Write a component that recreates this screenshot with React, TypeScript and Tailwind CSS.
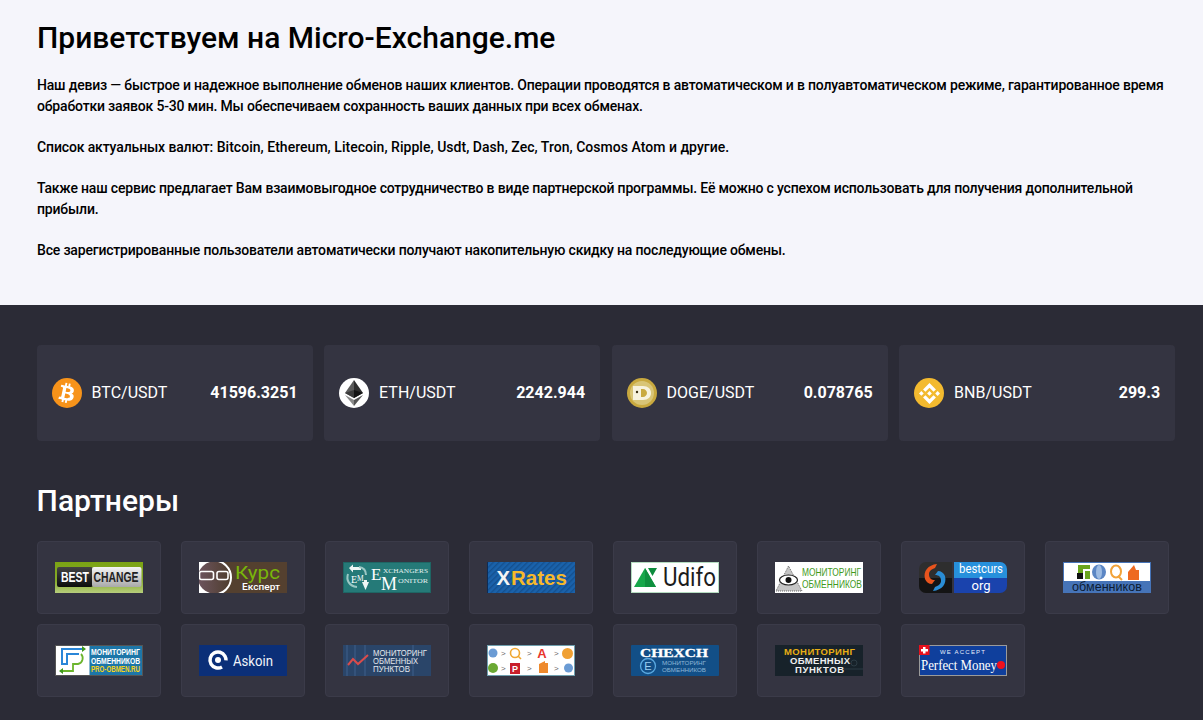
import type { ReactNode } from "react";
import { FaBtc } from "react-icons/fa";
import { SiBinance } from "react-icons/si";

const sans = "'Liberation Sans', Arial, sans-serif";
const serif = "'Liberation Serif', serif";
const roboto = "Roboto, sans-serif";

function Banner({ children }: { children: ReactNode }) {
  return (
    <svg width="88" height="31" viewBox="0 0 88 31" className="block">
      {children}
    </svg>
  );
}

function BestChange() {
  return (
    <Banner>
      <defs>
        <linearGradient id="bcBg" x1="0" y1="0" x2="0" y2="1">
          <stop offset="0" stopColor="#7ba313" />
          <stop offset="0.6" stopColor="#86ab2a" />
          <stop offset="1" stopColor="#b6cd7c" />
        </linearGradient>
        <linearGradient id="bcL" x1="0" y1="0" x2="0" y2="1">
          <stop offset="0" stopColor="#444" />
          <stop offset="1" stopColor="#0c0c0c" />
        </linearGradient>
        <linearGradient id="bcR" x1="0" y1="0" x2="0" y2="1">
          <stop offset="0" stopColor="#f4f4f4" />
          <stop offset="1" stopColor="#a9a9a9" />
        </linearGradient>
      </defs>
      <rect width="88" height="31" fill="url(#bcBg)" />
      <rect x="2" y="5" width="36" height="20" rx="2" fill="url(#bcL)" />
      <rect x="37" y="5" width="49.5" height="20" rx="2" fill="url(#bcR)" />
      <text x="6" y="20" fontFamily={sans} fontWeight="700" fontSize="14" fill="#fff" textLength="28" lengthAdjust="spacingAndGlyphs">
        BEST
      </text>
      <text x="38.5" y="20" fontFamily={sans} fontWeight="700" fontSize="14" fill="#222" textLength="45" lengthAdjust="spacingAndGlyphs">
        CHANGE
      </text>
    </Banner>
  );
}

function KursExpert() {
  return (
    <Banner>
      <defs>
        <linearGradient id="keBg" x1="0" y1="0" x2="1" y2="0">
          <stop offset="0" stopColor="#6e5560" />
          <stop offset="1" stopColor="#4e3d2d" />
        </linearGradient>
      </defs>
      <rect width="88" height="31" fill="#54402f" />
      <rect x="0" y="0" width="15" height="31" fill="#fff" />
      <circle cx="15" cy="15.5" r="17" fill="url(#keBg)" stroke="#fff" strokeWidth="2" />
      <rect x="0.5" y="9.5" width="14" height="8" rx="2" fill="none" stroke="#fff" strokeWidth="1.6" />
      <rect x="18" y="9.5" width="11" height="8" rx="2" fill="none" stroke="#fff" strokeWidth="1.6" />
      <text x="36" y="16.5" fontFamily={roboto} fontSize="19" fill="#79b60a" textLength="45" lengthAdjust="spacingAndGlyphs">
        Курс
      </text>
      <text x="43" y="28" fontFamily={roboto} fontWeight="500" fontSize="9.5" fill="#fff" textLength="38" lengthAdjust="spacingAndGlyphs">
        Експерт
      </text>
    </Banner>
  );
}

function ExchangersMonitor() {
  return (
    <Banner>
      <rect width="88" height="31" fill="#257a78" />
      <rect x="0.5" y="0.5" width="87" height="30" fill="none" stroke="#1e6664" />
      <path d="M6 6l4-3.5V5h8v3h-8v2.5zM26 20l-3.5 8-3.5-8h2v-2h3v2z" fill="#eef7f5" />
      <path d="M5 12c-2 6 1 12 9 13" fill="none" stroke="#9cc8c4" strokeWidth="2" />
      <path d="M16 5c4 .5 7 3 7 8" fill="none" stroke="#9cc8c4" strokeWidth="2" />
      <text x="8" y="20.5" fontFamily={serif} fontSize="10" fill="#fff">
        E
      </text>
      <text x="14" y="18.5" fontFamily={serif} fontSize="7.5" fill="#fff">
        M
      </text>
      <text x="28" y="18" fontFamily={serif} fontSize="17" fill="#fff">
        E
      </text>
      <text x="40" y="11" fontFamily={serif} fontSize="7" fill="#e4f1ef" textLength="45" lengthAdjust="spacingAndGlyphs">
        XCHANGERS
      </text>
      <text x="38" y="28" fontFamily={serif} fontSize="18" fill="#fff">
        M
      </text>
      <text x="55" y="21" fontFamily={serif} fontSize="7" fill="#e4f1ef" textLength="30" lengthAdjust="spacingAndGlyphs">
        ONITOR
      </text>
    </Banner>
  );
}

function XRates() {
  return (
    <Banner>
      <defs>
        <pattern id="xrStripes" width="4" height="4" patternUnits="userSpaceOnUse" patternTransform="rotate(45)">
          <rect width="4" height="4" fill="#1a62ab" />
          <rect width="1.4" height="4" fill="#14508f" />
        </pattern>
      </defs>
      <rect width="88" height="31" fill="url(#xrStripes)" />
      <rect x="0" y="0" width="1" height="31" fill="#0d2c55" />
      <text x="9.5" y="23" fontFamily={sans} fontWeight="700" fontSize="20" fill="#f4f4f4" textLength="13.5" lengthAdjust="spacingAndGlyphs">
        X
      </text>
      <text x="24" y="23" fontFamily={sans} fontWeight="700" fontSize="20" fill="#f6b92b" textLength="56" lengthAdjust="spacingAndGlyphs">
        Rates
      </text>
    </Banner>
  );
}

function Udifo() {
  return (
    <Banner>
      <rect width="88" height="31" fill="#fff" />
      <rect x="0.5" y="0.5" width="87" height="30" fill="none" stroke="#b5dcc0" />
      <path d="M3 25L14 6l11 19z" fill="#17a74a" />
      <path d="M14 6v19h11z" fill="#0f8f3e" />
      <path d="M17 6h9l-4.5 8z" fill="#0d8c3d" />
      <text x="32" y="24" fontFamily={roboto} fontSize="25" fill="#1c1c1c" textLength="53" lengthAdjust="spacingAndGlyphs">
        Udifo
      </text>
    </Banner>
  );
}

function MonitoringEye() {
  return (
    <Banner>
      <rect width="88" height="31" fill="#fff" />
      <path d="M13.5 4L1 29h26z" fill="#c6c6c6" />
      <path d="M13.5 4L1 29h26z" fill="none" stroke="#666" strokeDasharray="1 1" />
      <ellipse cx="13.5" cy="18" rx="9" ry="5" fill="#fff" stroke="#222" strokeWidth="1.2" />
      <circle cx="13.5" cy="18" r="3" fill="#111" />
      <text x="27" y="14" fontFamily={sans} fontSize="11" fill="#3f9a1c" textLength="59" lengthAdjust="spacingAndGlyphs">
        МОНИТОРИНГ
      </text>
      <text x="27" y="25.5" fontFamily={sans} fontSize="11" fill="#3f9a1c" textLength="60" lengthAdjust="spacingAndGlyphs">
        ОБМЕННИКОВ
      </text>
    </Banner>
  );
}

function BestCurs() {
  return (
    <Banner>
      <path d="M7 0h26v31H7a7 7 0 0 1-7-7V7a7 7 0 0 1 7-7z" fill="#2e2e2e" />
      <path d="M0 16h33v15H7a7 7 0 0 1-7-7z" fill="#141414" />
      <path d="M88 16V7a7 7 0 0 0-7-7H35v16z" fill="#2790dc" />
      <path d="M88 16v8a7 7 0 0 1-7 7H35V16z" fill="#1a43ad" />
      <path d="M18 2C9 3 4 9 6 17c1 3 4 5 7 5l3-4c-4 0-6-2-6-6 0-3 3-5 6-6z" fill="#e8541d" />
      <path d="M14 29c9-1 14-7 12-15-1-3-4-5-7-5l-3 4c4 0 6 2 6 6 0 3-3 5-6 6z" fill="#2a8dd4" />
      <text x="40" y="11" fontFamily={roboto} fontSize="13" fill="#fff" textLength="44" lengthAdjust="spacingAndGlyphs">
        bestcurs
      </text>
      <circle cx="62" cy="16" r="1.6" fill="#fff" />
      <text x="62" y="27.5" textAnchor="middle" fontFamily={roboto} fontSize="13" fill="#fff">
        org
      </text>
    </Banner>
  );
}

function Obmennikov() {
  return (
    <Banner>
      <rect width="88" height="31" fill="#4674b8" />
      <rect x="1" y="1" width="86" height="18" fill="#fff" />
      <path d="M15 3h12v4h-7v10h-5z" fill="#6aa51c" />
      <rect x="14" y="11" width="6" height="6" fill="#111" />
      <rect x="22" y="9" width="5" height="8" fill="#6aa51c" />
      <ellipse cx="36" cy="10" rx="7" ry="7.5" fill="#5b86c4" />
      <ellipse cx="36" cy="10" rx="3" ry="7" fill="#9dbbe2" />
      <ellipse cx="53" cy="9.5" rx="5" ry="6" fill="none" stroke="#f2a33a" strokeWidth="2" />
      <path d="M55 14l4 4" stroke="#f2a33a" strokeWidth="2" />
      <path d="M65 10l6-7 2 5h3v10H65z" fill="#ee6a21" />
      <text x="9" y="29" fontFamily={sans} fontSize="12.5" fill="#0d1c33" textLength="70" lengthAdjust="spacingAndGlyphs">
        обменников
      </text>
    </Banner>
  );
}

function ProObmen() {
  return (
    <Banner>
      <rect width="88" height="31" fill="#fff" />
      <rect x="34.5" y="0" width="53.5" height="31" fill="#1d76a8" />
      <rect x="0.5" y="0.5" width="87" height="30" fill="none" stroke="#555" />
      <path d="M28 4H7v15h5V9h12" fill="none" stroke="#2a86d8" strokeWidth="2" />
      <path d="M26 9c3 3 2 9-3 10h-5v7H7" fill="none" stroke="#6cb52d" strokeWidth="1.8" />
      <path d="M27 1l4 3-4 3zM8 23l-4 3 4 3z" fill="#3f9a1c" />
      <text x="36" y="10" fontFamily={sans} fontWeight="700" fontSize="9" fill="#fff" textLength="49" lengthAdjust="spacingAndGlyphs">
        МОНИТОРИНГ
      </text>
      <text x="36" y="18.5" fontFamily={sans} fontWeight="700" fontSize="9" fill="#fff" textLength="49" lengthAdjust="spacingAndGlyphs">
        ОБМЕННИКОВ
      </text>
      <text x="36" y="27" fontFamily={sans} fontWeight="700" fontSize="9.5" fill="#f7d31a" textLength="49" lengthAdjust="spacingAndGlyphs">
        PRO-OBMEN.RU
      </text>
    </Banner>
  );
}

function Askoin() {
  return (
    <Banner>
      <rect width="88" height="31" fill="#0b2f78" />
      <circle cx="19" cy="15" r="8" fill="none" stroke="#fff" strokeWidth="3.5" strokeDasharray="42 8" transform="rotate(60 19 15)" />
      <circle cx="19" cy="15" r="3" fill="#fff" />
      <text x="34" y="21" fontFamily={roboto} fontSize="15" fill="#f2f5fa" textLength="40" lengthAdjust="spacingAndGlyphs">
        Askoin
      </text>
    </Banner>
  );
}

function MonitoringChart() {
  return (
    <Banner>
      <rect width="88" height="31" fill="#2a4569" />
      <path d="M4 0v31M12 0v31M22 0v31M70 0v31" stroke="#34527a" strokeWidth="2" />
      <path d="M5 20l5-6 5 5 10-9" fill="none" stroke="#d94c4c" strokeWidth="2" />
      <text x="30" y="11" fontFamily={sans} fontSize="8.5" fill="#e4e8ee" textLength="54" lengthAdjust="spacingAndGlyphs">
        МОНИТОРИНГ
      </text>
      <text x="30" y="19" fontFamily={sans} fontSize="8.5" fill="#e4e8ee" textLength="45" lengthAdjust="spacingAndGlyphs">
        ОБМЕННЫХ
      </text>
      <text x="30" y="27" fontFamily={sans} fontSize="8.5" fill="#e4e8ee" textLength="37" lengthAdjust="spacingAndGlyphs">
        ПУНКТОВ
      </text>
    </Banner>
  );
}

function Arrows() {
  const gt = [
    [14, 11],
    [40, 11],
    [67, 11],
    [14, 26],
    [40, 26],
    [67, 26],
  ];
  return (
    <Banner>
      <rect width="88" height="31" fill="#fff" />
      <rect x="0.5" y="0.5" width="87" height="30" fill="none" stroke="#6f9fae" />
      {gt.map(([x, y], i) => (
        <text key={i} x={x} y={y} fontFamily={sans} fontSize="8" fill="#666">
          &gt;
        </text>
      ))}
      <circle cx="6" cy="8" r="4.5" fill="#6a9bd4" />
      <circle cx="28" cy="8" r="4.5" fill="none" stroke="#f0a833" strokeWidth="1.6" />
      <path d="M31 11l3 3" stroke="#f0a833" strokeWidth="1.6" />
      <text x="55" y="13" textAnchor="middle" fontFamily={sans} fontWeight="700" fontSize="13" fill="#e8352b">
        A
      </text>
      <circle cx="80.5" cy="8.5" r="5.5" fill="#f0a033" />
      <circle cx="6" cy="23" r="5" fill="#6aa833" />
      <rect x="23" y="18" width="10" height="11" fill="#c81e2a" />
      <text x="28" y="27" textAnchor="middle" fontFamily={sans} fontWeight="700" fontSize="9" fill="#fff">
        P
      </text>
      <path d="M52 19l6-3v2h3v10h-9z" fill="#ee8a2d" />
      <circle cx="81.5" cy="23" r="4.5" fill="#6a9bd4" />
    </Banner>
  );
}

function Chexch() {
  return (
    <Banner>
      <rect width="88" height="31" rx="1" fill="#124f87" />
      <text x="9" y="11.5" fontFamily={serif} fontWeight="700" fontSize="12" fill="#fff" stroke="#fff" strokeWidth="0.3" textLength="68" lengthAdjust="spacingAndGlyphs">
        CHEXCH
      </text>
      <circle cx="17" cy="21" r="7.5" fill="none" stroke="#5aa9e0" strokeWidth="1.3" />
      <text x="17" y="25" textAnchor="middle" fontFamily={sans} fontSize="11" fill="#9bd0f2">
        E
      </text>
      <text x="31" y="20" fontFamily={sans} fontSize="6" fill="#8fb6d6" textLength="44" lengthAdjust="spacingAndGlyphs">
        МОНИТОРИНГ
      </text>
      <text x="31" y="27" fontFamily={sans} fontSize="6" fill="#8fb6d6" textLength="44" lengthAdjust="spacingAndGlyphs">
        ОБМЕННИКОВ
      </text>
    </Banner>
  );
}

function MonitoringGold() {
  return (
    <Banner>
      <rect width="88" height="31" fill="#17222a" />
      <circle cx="79" cy="18" r="3" fill="none" stroke="#2c3b44" />
      <path d="M68 24h20" stroke="#2c3b44" />
      <text x="9" y="10" fontFamily={sans} fontWeight="700" fontSize="9.5" fill="#e9ae14" textLength="71" lengthAdjust="spacing">
        МОНИТОРИНГ
      </text>
      <text x="15" y="19" fontFamily={sans} fontWeight="700" fontSize="9.5" fill="#efefef" textLength="60" lengthAdjust="spacing">
        ОБМЕННЫХ
      </text>
      <text x="20" y="27.5" fontFamily={sans} fontWeight="700" fontSize="9.5" fill="#efefef" textLength="49" lengthAdjust="spacing">
        ПУНКТОВ
      </text>
    </Banner>
  );
}

function PerfectMoney() {
  return (
    <Banner>
      <rect width="88" height="31" fill="#0f3f9c" />
      <rect x="0.5" y="0.5" width="87" height="30" fill="none" stroke="#9a9a9a" />
      <rect x="0" y="0" width="10.5" height="10" fill="#e8101c" />
      <path d="M4 2h2.5v2H9v2.5H6.5v2H4v-2H2V4h2z" fill="#fff" />
      <text x="21" y="8.5" fontFamily={sans} fontSize="6" fill="#e6eefb" textLength="45" lengthAdjust="spacing">
        WE ACCEPT
      </text>
      <text x="2" y="25" fontFamily={serif} fontSize="14" fill="#fff" textLength="76" lengthAdjust="spacingAndGlyphs">
        Perfect Money
      </text>
      <circle cx="82" cy="20" r="4" fill="#f0101c" />
    </Banner>
  );
}

function EthIcon() {
  return (
    <div className="flex h-[30px] w-[30px] items-center justify-center rounded-full bg-white">
      <svg width="18" height="26" viewBox="0 0 18 26">
        <path d="M9 0L0 13l9 5z" fill="#5b5b5b" />
        <path d="M9 0l9 13-9 5z" fill="#2d2d2d" />
        <path d="M9 10L0 13l9 5z" fill="#3b3b3b" />
        <path d="M9 10l9 3-9 5z" fill="#141414" />
        <path d="M0 15l9 11v-6z" fill="#8a8a8a" />
        <path d="M18 15l-9 11v-6z" fill="#555" />
      </svg>
    </div>
  );
}

function DogeIcon() {
  return (
    <svg width="30" height="30" viewBox="0 0 30 30">
      <circle cx="15" cy="15" r="15" fill="#c9a93f" />
      <circle cx="15" cy="15" r="12" fill="#d9c577" />
      <path d="M6 8h10c5 0 8 3 8 7s-3 7-8 7H6z" fill="#f7f2de" />
      <path d="M14 11h2c2 0 4 2 4 4s-2 4-4 4h-2z" fill="#c9a93f" />
      <circle cx="10" cy="14" r="1.2" fill="#3a2d10" />
    </svg>
  );
}

const rates = [
  {
    pair: "BTC/USDT",
    value: "41596.3251",
    icon: (
      <div className="flex h-[30px] w-[30px] items-center justify-center rounded-full bg-[#f7931a] text-white">
        <FaBtc size={20} className="rotate-[12deg]" />
      </div>
    ),
  },
  { pair: "ETH/USDT", value: "2242.944", icon: <EthIcon /> },
  { pair: "DOGE/USDT", value: "0.078765", icon: <DogeIcon /> },
  {
    pair: "BNB/USDT",
    value: "299.3",
    icon: (
      <div className="flex h-[30px] w-[30px] items-center justify-center rounded-full bg-[#f3ba2f] text-white">
        <SiBinance size={21} />
      </div>
    ),
  },
];

const partners = [
  <BestChange />,
  <KursExpert />,
  <ExchangersMonitor />,
  <XRates />,
  <Udifo />,
  <MonitoringEye />,
  <BestCurs />,
  <Obmennikov />,
  <ProObmen />,
  <Askoin />,
  <MonitoringChart />,
  <Arrows />,
  <Chexch />,
  <MonitoringGold />,
  <PerfectMoney />,
];

export default function App() {
  return (
    <div className="font-['Roboto',sans-serif]">
      <section className="h-[305px] bg-[#f5f5fb] pl-[37px] pr-[28px] pt-[18px] text-black">
        <h1 className="text-[30px] font-medium leading-10">Приветствуем на Micro-Exchange.me</h1>
        <div className="mt-[17px] flex flex-col gap-5 text-sm font-medium leading-[21px] tracking-[-0.185px]">
          <p>
            Наш девиз — быстрое и надежное выполнение обменов наших клиентов. Операции проводятся в автоматическом и в
            полуавтоматическом режиме, гарантированное время обработки заявок 5-30 мин. Мы обеспечиваем сохранность ваших
            данных при всех обменах.
          </p>
          <p className="tracking-[0.03px]">
            <span className="tracking-[-0.13px]">Список актуальных валют:</span> Bitcoin, Ethereum, Litecoin, Ripple, Usdt,
            Dash, Zec, Tron, Cosmos Atom и другие.
          </p>
          <p>
            Также наш сервис предлагает Вам взаимовыгодное сотрудничество в виде партнерской программы. Её можно с успехом
            использовать для получения дополнительной прибыли.
          </p>
          <p>Все зарегистрированные пользователи автоматически получают накопительную скидку на последующие обмены.</p>
        </div>
      </section>

      <section className="h-[415px] overflow-hidden bg-[#2b2b36] pl-[36.6px] pt-10 text-white">
        <div className="grid grid-cols-[repeat(4,276px)] gap-[11.5px]">
          {rates.map((r) => (
            <div key={r.pair} className="flex h-24 items-center rounded bg-[#343441] px-[15px]">
              {r.icon}
              <span className="ml-[10px] text-base">{r.pair}</span>
              <span className="ml-auto text-base font-bold">{r.value}</span>
            </div>
          ))}
        </div>

        <h2 className="mt-[42px] text-[30px] font-medium leading-9">Партнеры</h2>

        <div className="mt-[22px] flex flex-wrap gap-x-5 gap-y-[10px]">
          {partners.map((logo, i) => (
            <div
              key={i}
              className="flex h-[73px] w-[124px] items-center justify-center rounded border border-[#3b3b49] bg-[#343441]"
            >
              {logo}
            </div>
          ))}
        </div>
      </section>
    </div>
  );
}
